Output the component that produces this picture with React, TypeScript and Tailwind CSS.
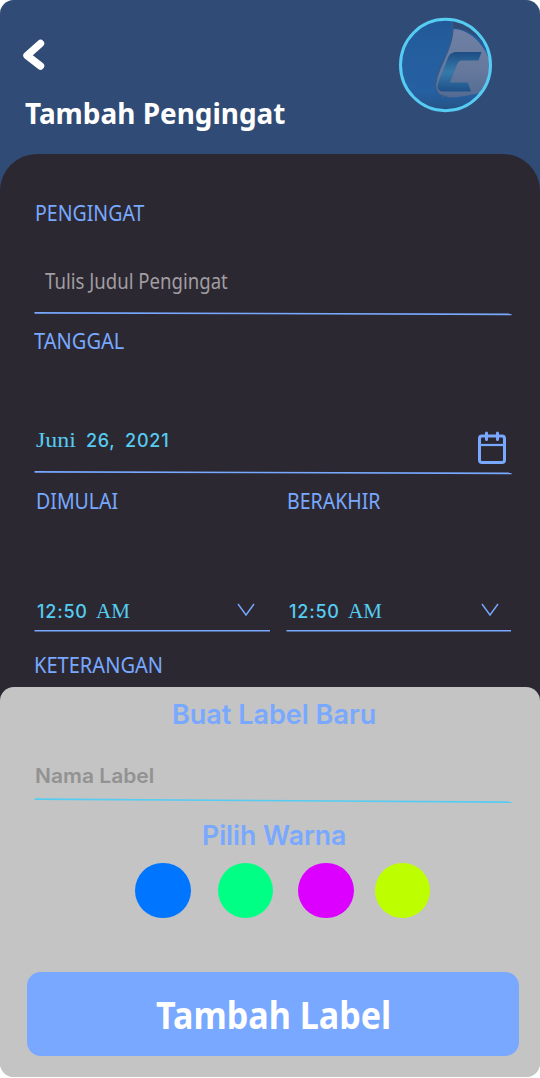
import type { ReactNode } from 'react';

const labelFont = "block origin-left whitespace-nowrap font-['Noto_Sans',sans-serif] text-[21px] leading-[30px] text-[#78a8ff]";

function FieldLabel({ children, className }: { children: ReactNode; className: string }) {
  return <span className={`${labelFont} ${className}`}>{children}</span>;
}

function Rule({ color, drop }: { color: string; drop: number }) {
  return (
    <svg className="block h-[8px] w-[478px]" viewBox="0 0 478 8" fill="none">
      <line x1="0.5" y1={4.6 - drop / 2} x2="477.500" y2={4.6 + drop / 2} stroke={color} strokeWidth="1.600" />
    </svg>
  );
}

function BackIcon() {
  return (
    <svg className="block h-[32px] w-[24px]" viewBox="0 0 24 32" fill="none">
      <path d="M19.500 4.500 L6 16.500 L19.500 27" stroke="#fff" strokeWidth="7.400" strokeLinecap="round" strokeLinejoin="round" />
    </svg>
  );
}

function Avatar() {
  return (
    <svg className="block h-[96px] w-[94px]" viewBox="0 0 94 96" fill="none">
      <defs>
        <linearGradient id="base" x1="0" y1="0" x2="0" y2="1">
          <stop offset="0" stopColor="#225796" />
          <stop offset="0.35" stopColor="#245e9f" />
          <stop offset="0.78" stopColor="#2560a2" />
          <stop offset="1" stopColor="#27507f" />
        </linearGradient>
        <linearGradient id="sail" x1="0" y1="0" x2="0" y2="1">
          <stop offset="0" stopColor="#7080a5" />
          <stop offset="0.6" stopColor="#66799d" />
          <stop offset="1" stopColor="#536b93" />
        </linearGradient>
        <linearGradient id="letter" x1="0" y1="0" x2="0" y2="1">
          <stop offset="0" stopColor="#1e4d84" />
          <stop offset="0.5" stopColor="#367aaa" />
          <stop offset="1" stopColor="#1f5189" />
        </linearGradient>
        <clipPath id="disc"><ellipse cx="46.5" cy="48" rx="45.5" ry="46" /></clipPath>
      </defs>
      <g clipPath="url(#disc)">
        <rect width="94" height="96" fill="url(#base)" />
        <path d="M53 0 H94 V40 C86 24 72 12 54 11 Z" fill="#304b75" />
        <path d="M54.500 12 C68 12.500 81 22 90 41 L94 50 V75 C78 74 61 83 44 79.500 C36 76 36 69 39 59 C43 47 54.500 28 54.500 12 Z" fill="url(#sail)" />
        <path d="M53.500 3 C56 26 40 49 37.500 60 C34 73 39 79 48 79.500" stroke="#365a8a" strokeWidth="1.200" />
        <path d="M58 35 H82.500 L79.500 43.500 H64 C60 43.500 59 45 57.500 49 L51 65.500 H69 L72 74.500 H44 C39 74.500 37.500 71 39.500 65 L48 43 C50 37 53 35 58 35 Z" fill="url(#letter)" />
      </g>
      <ellipse cx="46.500" cy="48" rx="45" ry="45.700" stroke="#56ccf2" strokeWidth="3" />
    </svg>
  );
}

function CalendarIcon() {
  return (
    <svg className="block h-[34px] w-[30px]" viewBox="0 0 30 34" fill="none" stroke="#78a8ff">
      <rect x="2.500" y="5" width="25" height="26.500" rx="2.500" strokeWidth="3" />
      <path d="M2 14 H28" strokeWidth="2.200" />
      <path d="M9.500 2 V8.500 M20.500 2 V8.500" strokeWidth="3" strokeLinecap="round" />
    </svg>
  );
}

function TimeField({ className, chevron }: { className: string; chevron: string }) {
  return (
    <div className={`flex h-[36px] flex-col ${className}`}>
      <div className="flex h-[32px] justify-between">
        <div className="flex pl-[3px] leading-[30px] text-[#56ccf2]">
          <span className="w-[59px] pt-px font-['Inter',sans-serif] text-[18px] font-medium tracking-[0.8px]">12:50</span>
          <span className="font-['Liberation_Serif',serif] text-[21px]">AM</span>
        </div>
        <svg className={`mt-[6px] block h-[16px] w-[20px] ${chevron}`} viewBox="0 0 20 16" fill="none">
          <path d="M2 2 L10 13 L18 2" stroke="#78a8ff" strokeWidth="1.400" />
        </svg>
      </div>
      <svg className="block h-[4px] w-full" fill="none">
        <line x1="0.5" y1="2.800" x2="100%" y2="2.800" stroke="#78a8ff" strokeWidth="1.600" />
      </svg>
    </div>
  );
}

export default function App() {
  return (
    <main className="flex h-[1077px] w-[540px] flex-col overflow-hidden rounded-[14px] bg-[#c4c4c4]">
      <div className="flex h-[701px] shrink-0 flex-col bg-[#304b75]">
        <header className="flex h-[154px] shrink-0 justify-between">
          <div className="pt-[39px] pl-[21px]">
            <BackIcon />
            <h1 className="mt-[22px] ml-[4px] origin-left scale-x-[0.963] whitespace-nowrap font-['Noto_Sans',sans-serif] text-[29px] leading-[40px] font-bold text-white">Tambah Pengingat</h1>
          </div>
          <div className="mt-[17px] mr-[47px]">
            <Avatar />
          </div>
        </header>

        <form className="flex grow flex-col rounded-t-[37px] bg-[#2b2831] pt-[44px] pl-[34px]">
          <FieldLabel className="ml-px scale-x-[0.93]">PENGINGAT</FieldLabel>
          <span className="mt-[38px] ml-[11px] block origin-left scale-x-[0.885] whitespace-nowrap font-['Noto_Sans',sans-serif] text-[21px] leading-[30px] text-[#a19da2]">Tulis Judul Pengingat</span>
          <div className="mt-[13px]"><Rule color="#78a8ff" drop={1.5} /></div>
          <FieldLabel className="mt-[9px] scale-x-[0.955]">TANGGAL</FieldLabel>
          <div className="mt-[69px] flex h-[43px] w-[477px] justify-between">
            <div className="flex pl-[2px] leading-[30px] text-[#56ccf2]">
              <span className="w-[50px] origin-left scale-x-[1.14] font-['Liberation_Serif',serif] text-[21px]">Juni</span>
              <span className="w-[39px] pt-px font-['Inter',sans-serif] text-[18px] font-medium tracking-[0.7px]">26,</span>
              <span className="pt-px font-['Inter',sans-serif] text-[18px] font-medium tracking-[0.8px]">2021</span>
            </div>
            <div className="mt-[6px] mr-[4px]"><CalendarIcon /></div>
          </div>
          <Rule color="#78a8ff" drop={1.5} />
          <div className="mt-[10px] flex">
            <div className="w-[253px] pl-[2px]"><FieldLabel className="scale-x-[0.93]">DIMULAI</FieldLabel></div>
            <FieldLabel className="scale-x-[0.93]">BERAKHIR</FieldLabel>
          </div>
          <div className="mt-[80px] flex gap-[16px]">
            <TimeField className="w-[236px]" chevron="mr-[14px]" />
            <TimeField className="w-[225px]" chevron="mr-[11px]" />
          </div>
          <FieldLabel className="mt-[18px] scale-x-[0.955]">KETERANGAN</FieldLabel>
        </form>
      </div>

      <section className="-mt-[14px] flex grow flex-col rounded-t-[14px] bg-[#c4c4c4] font-['Inter',sans-serif] font-semibold">
        <h2 className="mt-[13px] ml-[172px] origin-left whitespace-nowrap text-[27px] leading-[30px] text-[#78a8ff]">Buat Label Baru</h2>
        <span className="mt-[31px] ml-[34.5px] block origin-left scale-x-[1.05] whitespace-nowrap text-[20px] leading-[30px] text-[#929292]">Nama Label</span>
        <div className="mt-[5px] ml-[34px]"><Rule color="#56ccf2" drop={3} /></div>
        <h2 className="mt-[17px] ml-[201.5px] origin-left scale-x-[0.985] whitespace-nowrap text-[27px] leading-[30px] text-[#78a8ff]">Pilih Warna</h2>
        <div className="mt-[11.5px] ml-[135px] flex">
          <i className="mr-[27px] size-[55.5px] rounded-full bg-[#0075ff]" />
          <i className="mr-[25px] size-[55.5px] rounded-full bg-[#00ff85]" />
          <i className="mr-[21px] size-[55.5px] rounded-full bg-[#db00ff]" />
          <i className="size-[55.5px] rounded-full bg-[#bdff00]" />
        </div>
        <button className="mt-[54px] ml-[27px] flex h-[84px] w-[492px] items-center rounded-[14px] bg-[#78a8ff] pt-[2px] pl-[128.5px]">
          <span className="block origin-left scale-x-[0.922] whitespace-nowrap font-['Noto_Sans',sans-serif] text-[37px] leading-[50px] font-bold text-white">Tambah Label</span>
        </button>
      </section>
    </main>
  );
}
